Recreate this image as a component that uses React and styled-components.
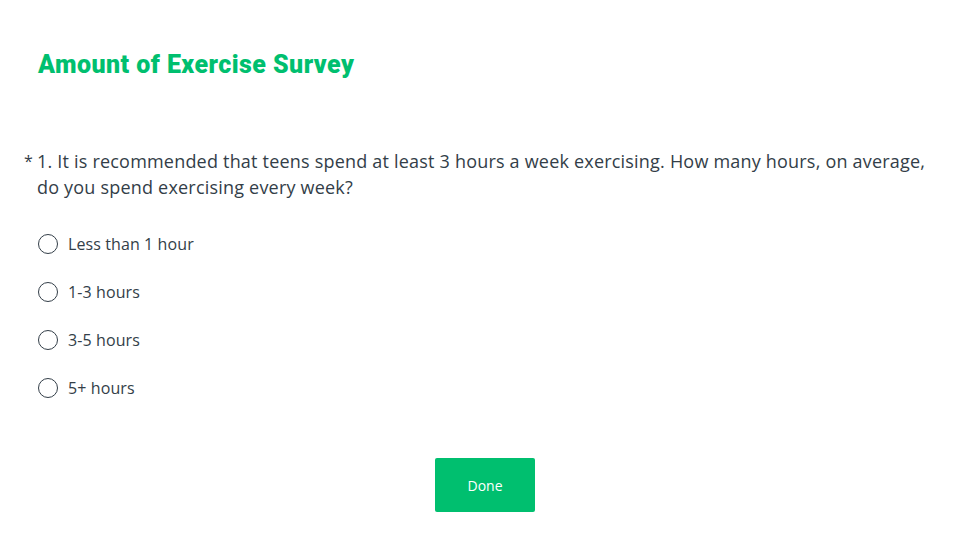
import React from "react";
import styled, { createGlobalStyle } from "styled-components";

const Global = createGlobalStyle`
  html, body { margin: 0; padding: 0; background: #fff; }
  body { font-family: "Open Sans", "Liberation Sans", sans-serif; color: #333e48; }
`;

const Page = styled.div`
  width: 955px;
  box-sizing: border-box;
  padding: 49px 16px 0 24px;
`;

const Title = styled.h1`
  margin: 0 0 0 14px;
  font-family: Roboto, "Liberation Sans", sans-serif;
  font-weight: 900;
  font-size: 25px;
  line-height: 32px;
  color: #00bf6f;
  letter-spacing: 0.45px;
`;

const Question = styled.div`
  margin-top: 67px;
  display: flex;
  font-size: 18px;
  line-height: 26px;
  font-weight: 400;
  letter-spacing: 0.2px;
  color: #333e48;
`;

const Star = styled.span`
  width: 13px;
  flex: none;
  font-size: 16px;
`;

const QText = styled.div`
  flex: 1;
`;

const Options = styled.div`
  margin: 32px 0 0 14px;
  display: flex;
  flex-direction: column;
  gap: 24px;
`;

const Option = styled.label`
  display: flex;
  align-items: center;
  gap: 10px;
  height: 24px;
  font-size: 16px;
  font-weight: 400;
  letter-spacing: 0.1px;
  color: #333e48;
  cursor: pointer;
`;

const Radio = styled.span`
  width: 18px;
  height: 18px;
  border: 1.5px solid #333e48;
  border-radius: 50%;
  flex: none;
`;

const Footer = styled.div`
  display: flex;
  justify-content: center;
  margin-top: 58px;
  padding-left: 7px;
`;

const Button = styled.button`
  width: 100px;
  height: 54px;
  border: none;
  border-radius: 2px;
  background: #00bf6f;
  color: #fff;
  font-family: "Open Sans", "Liberation Sans", sans-serif;
  font-size: 14px;
  font-weight: 500;
  cursor: pointer;
`;

const options = ["Less than 1 hour", "1-3 hours", "3-5 hours", "5+ hours"];

export default function App() {
  return (
    <Page>
      <Global />
      <Title>Amount of Exercise Survey</Title>
      <Question>
        <Star>*</Star>
        <QText>
          1. It is recommended that teens spend at least 3 hours a week exercising. How many hours, on average, do you spend exercising every week?
        </QText>
      </Question>
      <Options>
        {options.map((o) => (
          <Option key={o}>
            <Radio />
            {o}
          </Option>
        ))}
      </Options>
      <Footer>
        <Button>Done</Button>
      </Footer>
    </Page>
  );
}
